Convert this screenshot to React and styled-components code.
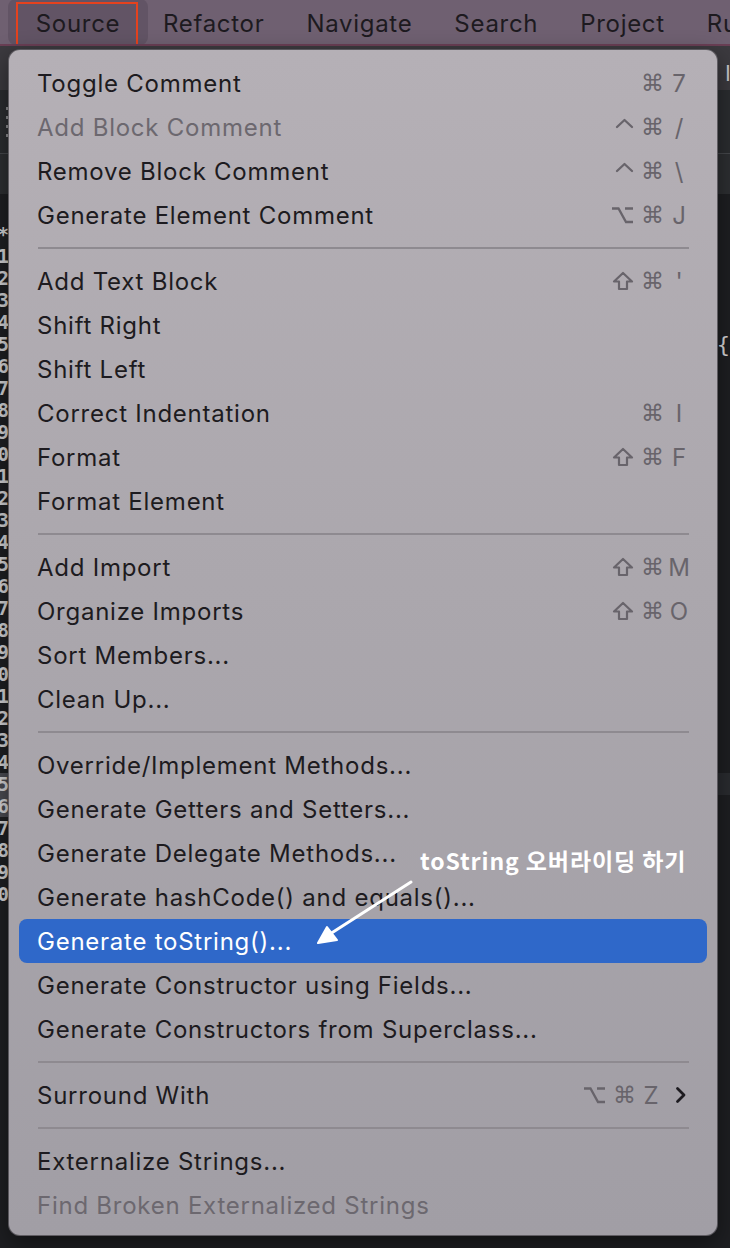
import React from "react";
import styled, { createGlobalStyle } from "styled-components";

const GlobalStyle = createGlobalStyle`
  html, body { margin: 0; padding: 0; background: #1e1f22; }
  body { font-family: Inter, "Liberation Sans", "Noto Sans CJK KR", sans-serif; }
  * { box-sizing: border-box; }
`;

const Screen = styled.div`
  position: relative;
  width: 730px;
  height: 1248px;
  overflow: hidden;
  background: #1e1f22;
  display: flex;
  flex-direction: column;
`;

const MenuBar = styled.div`
  height: 46px;
  flex: none;
  display: flex;
  align-items: center;
  gap: 42px;
  padding-left: 8px;
  background: #6f6071;
  border-bottom: 2px solid #6a3f55;
  white-space: nowrap;
  overflow: hidden;
`;

const BarItem = styled.div`
  flex: none;
  font-size: 24px;
  color: #1d1a1f;
  letter-spacing: 0.7px;
  padding-top: 2px;
`;

const SourceBox = styled.div`
  position: relative;
  flex: none;
  width: 140px;
  height: 46px;
  margin-right: -27px;
  display: flex;
  align-items: center;
  justify-content: center;
  padding-top: 2px;
  background: #625465;
  border-radius: 8px;
  font-size: 24px;
  letter-spacing: 0.7px;
  color: #1d1a1f;
  &::after {
    content: "";
    position: absolute;
    left: 8px;
    top: 3px;
    width: 118px;
    height: 43px;
    border: 2px solid #e5421e;
  }
`;

const TabBar = styled.div`
  height: 44px;
  flex: none;
  background: #3c3a3f;
  display: flex;
  justify-content: flex-end;
  align-items: center;
  overflow: hidden;
`;

const TabLabel = styled.div`
  font-size: 22px;
  color: #c9c7cc;
  margin-right: -6px;
  padding-top: 10px;
`;

const Toolbar = styled.div`
  height: 64px;
  flex: none;
  background: #2b2d30;
  border-bottom: 1px solid #46484c;
  display: flex;
  align-items: center;
  padding-left: 6px;
`;

const Handle = styled.div`
  display: flex;
  flex-direction: column;
  gap: 6px;
  span { width: 3px; height: 3px; background: #8d8d90; }
`;

const Breadcrumb = styled.div`
  height: 40px;
  flex: none;
  background: #2d2f32;
`;

const CodeArea = styled.div`
  flex: 1;
  display: flex;
  flex-direction: column;
  padding-top: 29px;
`;

const CodeLine = styled.div`
  height: 22px;
  display: flex;
  align-items: center;
  background: ${(p) => (p.$current ? "#2a2c30" : "transparent")};
`;

const Gutter = styled.div`
  width: 9px;
  height: 100%;
  display: flex;
  justify-content: flex-end;
  align-items: center;
  overflow: hidden;
  flex: none;
  font-family: "DejaVu Sans Mono", monospace;
  font-size: 19px;
  font-weight: bold;
  color: #d2d2d4;
  background: ${(p) => (p.$mark ? "#4a4b52" : "transparent")};
`;

const Code = styled.div`
  flex: 1;
  display: flex;
  justify-content: flex-end;
  font-family: "DejaVu Sans Mono", monospace;
  font-size: 22px;
  color: #d8d8da;
`;

const Menu = styled.div`
  position: absolute;
  left: 8px;
  top: 49px;
  width: 710px;
  height: 1187px;
  border-radius: 12px;
  border: 1px solid rgba(40, 38, 44, 0.6);
  background: linear-gradient(180deg, #b5b0b6 0%, #aba7ad 45%, #a19ea5 100%);
  box-shadow: 0 8px 24px rgba(0, 0, 0, 0.45);
  padding: 11px 0 8px;
  display: flex;
  flex-direction: column;
`;

const Item = styled.div`
  height: 44px;
  flex: none;
  margin: 0 10px;
  padding: 0 16px 0 18px;
  border-radius: 8px;
  display: flex;
  align-items: center;
  background: ${(p) => (p.$active ? "#2f68c9" : "transparent")};
  color: ${(p) => (p.$active ? "#ffffff" : p.$disabled ? "#6c686f" : "#1d1b20")};
`;

const Label = styled.div`
  flex: 1;
  font-size: 24px;
  letter-spacing: 0.75px;
  white-space: nowrap;
`;

const Shortcut = styled.div`
  display: flex;
  align-items: center;
  color: #68646b;
`;

const ModBox = styled.span`
  display: flex;
  align-items: center;
  margin-left: 7px;
  font-family: "DejaVu Sans", sans-serif;
  font-size: 23px;
  line-height: 1;
`;

const Key = styled.span`
  width: 24px;
  margin-left: 3px;
  text-align: center;
  font-family: Inter, "Liberation Sans", sans-serif;
  font-size: 24px;
`;

const Arrow = styled.span`
  width: 28px;
  display: flex;
  justify-content: flex-end;
  padding-right: 4px;
`;

const Separator = styled.div`
  height: 22px;
  flex: none;
  display: flex;
  align-items: center;
  padding: 0 28px 0 29px;
  &::before {
    content: "";
    flex: 1;
    height: 2px;
    background: #8e8a90;
  }
`;

const Note = styled.div`
  position: absolute;
  left: 420px;
  top: 843px;
  font-family: "Noto Sans CJK KR", Inter, sans-serif;
  font-weight: 700;
  font-size: 23px;
  letter-spacing: 0.9px;
  color: #ffffff;
  white-space: nowrap;
`;

const NoteArrow = styled.svg`
  position: absolute;
  left: 300px;
  top: 870px;
`;

const sections = [
  [
    { label: "Toggle Comment", mods: ["cmd"], key: "7" },
    { label: "Add Block Comment", disabled: true, mods: ["ctrl", "cmd"], key: "/" },
    { label: "Remove Block Comment", mods: ["ctrl", "cmd"], key: "\\" },
    { label: "Generate Element Comment", mods: ["opt", "cmd"], key: "J" },
  ],
  [
    { label: "Add Text Block", mods: ["shift", "cmd"], key: "'" },
    { label: "Shift Right" },
    { label: "Shift Left" },
    { label: "Correct Indentation", mods: ["cmd"], key: "I" },
    { label: "Format", mods: ["shift", "cmd"], key: "F" },
    { label: "Format Element" },
  ],
  [
    { label: "Add Import", mods: ["shift", "cmd"], key: "M" },
    { label: "Organize Imports", mods: ["shift", "cmd"], key: "O" },
    { label: "Sort Members..." },
    { label: "Clean Up..." },
  ],
  [
    { label: "Override/Implement Methods..." },
    { label: "Generate Getters and Setters..." },
    { label: "Generate Delegate Methods..." },
    { label: "Generate hashCode() and equals()..." },
    { label: "Generate toString()...", active: true },
    { label: "Generate Constructor using Fields..." },
    { label: "Generate Constructors from Superclass..." },
  ],
  [{ label: "Surround With", mods: ["opt", "cmd"], key: "Z", submenu: true }],
  [
    { label: "Externalize Strings..." },
    { label: "Find Broken Externalized Strings", disabled: true },
  ],
];

const codeLines = Array.from({ length: 31 }, (_, i) => ({
  n: i === 0 ? "*" : String(10 + i),
  code: i === 5 ? "{" : "",
  current: i === 25,
  mark: i === 25 || i === 26,
}));

function Mod({ type }) {
  if (type === "cmd") return <ModBox>⌘</ModBox>;
  if (type === "shift")
    return (
      <ModBox>
        <svg width="22" height="20" viewBox="0 0 22 20">
          <path d="M11 2 L20 10.5 L15 10.5 L15 18 L7 18 L7 10.5 L2 10.5 Z" fill="none" stroke="#68646b" strokeWidth="2.2" strokeLinejoin="round" />
        </svg>
      </ModBox>
    );
  if (type === "ctrl")
    return (
      <ModBox>
        <svg width="19" height="20" viewBox="0 0 19 20">
          <path d="M2 10 L9.5 3 L17 10" fill="none" stroke="#68646b" strokeWidth="2.3" strokeLinecap="round" strokeLinejoin="round" />
        </svg>
      </ModBox>
    );
  return (
    <ModBox>
      <svg width="23" height="20" viewBox="0 0 23 20">
        <path d="M1 3.5 H7.5 L15 17 H22 M14 3.5 H22" fill="none" stroke="#68646b" strokeWidth="2.3" />
      </svg>
    </ModBox>
  );
}

function Chevron() {
  return (
    <svg width="12" height="18" viewBox="0 0 12 18">
      <path d="M2.5 2.5 L9 9 L2.5 15.5" fill="none" stroke="#1d1b20" strokeWidth="2.8" strokeLinecap="round" strokeLinejoin="round" />
    </svg>
  );
}

export default function App() {
  return (
    <>
      <GlobalStyle />
      <Screen>
        <MenuBar>
          <SourceBox>Source</SourceBox>
          <BarItem>Refactor</BarItem>
          <BarItem>Navigate</BarItem>
          <BarItem>Search</BarItem>
          <BarItem>Project</BarItem>
          <BarItem>Run</BarItem>
        </MenuBar>
        <TabBar>
          <TabLabel>li</TabLabel>
        </TabBar>
        <Toolbar>
          <Handle>
            <span />
            <span />
            <span />
            <span />
          </Handle>
        </Toolbar>
        <Breadcrumb />
        <CodeArea>
          {codeLines.map((l, i) => (
            <CodeLine key={i} $current={l.current}>
              <Gutter $mark={l.mark}>{l.n}</Gutter>
              <Code>{l.code}</Code>
            </CodeLine>
          ))}
        </CodeArea>

        <Menu>
          {sections.map((sec, si) => (
            <React.Fragment key={si}>
              {si > 0 && <Separator />}
              {sec.map((it) => (
                <Item key={it.label} $active={it.active} $disabled={it.disabled}>
                  <Label>{it.label}</Label>
                  {it.mods && (
                    <Shortcut>
                      {it.mods.map((m, mi) => (
                        <Mod key={mi} type={m} />
                      ))}
                      <Key>{it.key}</Key>
                      {it.submenu && (
                        <Arrow>
                          <Chevron />
                        </Arrow>
                      )}
                    </Shortcut>
                  )}
                </Item>
              ))}
            </React.Fragment>
          ))}
        </Menu>

        <Note>toString 오버라이딩 하기</Note>
        <NoteArrow width="120" height="90" viewBox="0 0 120 90">
          <path d="M111 12 L30 64" stroke="#ffffff" strokeWidth="3" strokeLinecap="round" fill="none" />
          <path d="M18 73 L27 57 L37 70 Z" fill="#ffffff" stroke="#ffffff" strokeWidth="2" strokeLinejoin="round" />
        </NoteArrow>
      </Screen>
    </>
  );
}
